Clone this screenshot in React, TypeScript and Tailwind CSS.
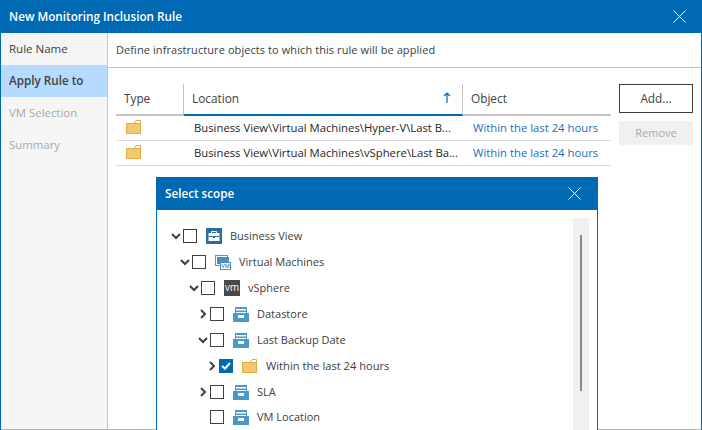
const font = "font-['Open_Sans','Noto_Sans',sans-serif]"

function Folder() {
    return (
        <svg className="block shrink-0" width="15" height="14" viewBox="0 0 15 14">
            <path d="M8 4l2-3.500h4.500V4" fill="#fff" stroke="#e3a93c" />
            <path d="M.5 3.500h14v10H.5z" fill="#f2c96f" stroke="#e3a93c" />
        </svg>
    )
}

function Chevron({ open }: { open?: boolean }) {
    return (
        <svg width="10" height="10" viewBox="0 0 10 10" className="block shrink-0">
            {open ? (
                <path d="M1 3l4 4 4-4" fill="none" stroke="#404040" strokeWidth="2" />
            ) : (
                <path d="M3 1l4 4-4 4" fill="none" stroke="#404040" strokeWidth="2" />
            )}
        </svg>
    )
}

function Check({ checked }: { checked?: boolean }) {
    if (checked) {
        return (
            <span className="w-[14px] h-[14px] shrink-0 bg-[#0069b3] flex items-center justify-center">
                <svg width="10" height="8" viewBox="0 0 10 8">
                    <path d="M1 4l3 2.600L9 1" fill="none" stroke="#fff" strokeWidth="2" />
                </svg>
            </span>
        )
    }
    return <span className="w-[14px] h-[14px] shrink-0 border border-[#404040] bg-white" />
}

function BusinessIcon() {
    return (
        <svg width="16" height="16" viewBox="0 0 16 16" className="block shrink-0">
            <rect width="16" height="16" fill="#2b6e9e" />
            <path d="M2.500 5h11v8h-11z" fill="#fff" />
            <path d="M5.500 5V3.500h5V5" fill="none" stroke="#fff" />
            <path d="M2.500 8.500h11" stroke="#2b6e9e" />
            <path d="M7 8h2v2H7z" fill="#2b6e9e" />
        </svg>
    )
}

function VmGroupIcon() {
    return (
        <svg width="16" height="15" viewBox="0 0 16 15" className="block shrink-0">
            <rect x=".5" y=".5" width="12" height="10" fill="#fff" stroke="#8a8a8a" />
            <rect x="2" y="2" width="12" height="7" fill="#4a90c8" />
            <rect x="5.500" y="7.500" width="10" height="7" fill="#fff" stroke="#4a90c8" />
            <text x="10.500" y="13.200" textAnchor="middle" fontSize="5.500" fill="#5a7a90" fontWeight="600">VM</text>
        </svg>
    )
}

function VsphereIcon() {
    return (
        <svg width="16" height="16" viewBox="0 0 16 16" className="block shrink-0">
            <rect width="16" height="16" fill="#47494d" />
            <text x="8" y="11" textAnchor="middle" fontSize="10" fill="#fff" textLength="14" lengthAdjust="spacingAndGlyphs">vm</text>
        </svg>
    )
}

function CabinetIcon() {
    return (
        <svg width="16" height="15" viewBox="0 0 16 15" className="block shrink-0">
            <path d="M2 0h12v2H2z" fill="#4a97c9" />
            <path d="M2 2h1v4H2zM13 2h1v4h-1z" fill="#4a97c9" />
            <path d="M3 3.500h10v1.500H3z" fill="#4a97c9" />
            <path d="M0 6h16v9H0z" fill="#4a97c9" />
            <path d="M5 8h6v3H5z" fill="#fff" />
        </svg>
    )
}

const treeRows = [
    { label: "Business View", pad: "pl-[14px]", icon: <BusinessIcon />, open: true, arrow: true },
    { label: "Virtual Machines", pad: "pl-[23px]", icon: <VmGroupIcon />, open: true, arrow: true },
    { label: "vSphere", pad: "pl-[32px]", icon: <VsphereIcon />, open: true, arrow: true },
    { label: "Datastore", pad: "pl-[41px]", icon: <CabinetIcon />, arrow: true },
    { label: "Last Backup Date", pad: "pl-[41px]", icon: <CabinetIcon />, open: true, arrow: true },
    { label: "Within the last 24 hours", pad: "pl-[50px]", icon: <Folder />, arrow: true, checked: true, wide: true },
    { label: "SLA", pad: "pl-[41px]", icon: <CabinetIcon />, arrow: true },
    { label: "VM Location", pad: "pl-[41px]", icon: <CabinetIcon /> },
]

const tableRows = [
    "Business View\\Virtual Machines\\Hyper-V\\Last B...",
    "Business View\\Virtual Machines\\vSphere\\Last Ba...",
]

export default function App() {
    return (
        <div className={`relative w-[702px] h-[430px] overflow-hidden bg-white text-[11.3px] text-[#404040] ${font}`}>
            <div className="h-full flex flex-col border-x border-[#0069b3]">
                <div className="h-[33px] shrink-0 bg-[#0069b3] flex items-center justify-between pl-[9px] pr-[16px] -mx-px">
                    <span className="text-white font-semibold text-[11.7px]">New Monitoring Inclusion Rule</span>
                    <svg width="13" height="13" viewBox="0 0 13 13">
                        <path d="M.5.5l12 12M12.500.5l-12 12" stroke="#fff" />
                    </svg>
                </div>
                <div className="flex-1 flex border-b border-[#b8b8b8]">
                    <div className="w-[107px] shrink-0 bg-[#f5f5f5] border-r border-[#c4c4c4]">
                        <div className="h-[32px] flex items-center pl-[8px] text-[11.5px]">Rule Name</div>
                        <div className="h-[32px] flex items-center pl-[8px] text-[11.7px] font-semibold bg-[#b5dcff]">Apply Rule to</div>
                        <div className="h-[32px] flex items-center pl-[8px] text-[11.4px] text-[#a8a8a8]">VM Selection</div>
                        <div className="h-[32px] flex items-center pl-[8px] text-[11.4px] text-[#a8a8a8]">Summary</div>
                    </div>
                    <div className="flex-1">
                        <div className="h-[35px] flex items-center pl-[8px] border-b border-[#c4c4c4] text-[11px] tracking-[0.08px]">
                            Define infrastructure objects to which this rule will be applied
                        </div>
                        <div className="flex pl-[8px] pt-[16px] gap-[8px]">
                            <div className="w-[495px]">
                                <div className="flex h-[32px] text-[11.800px]">
                                    <div className="w-[68px] flex items-center pl-[8px] border-r border-[#c4c4c4] border-b-[2px] border-b-[#c4c4c4]">Type</div>
                                    <div className="w-[279px] flex items-center justify-between pl-[8px] pr-[11px] border-r border-[#c4c4c4] border-b-[2px] border-b-[#0069b3]">
                                        <span>Location</span>
                                        <svg width="8" height="11" viewBox="0 0 8 11" className="mb-[3px]">
                                            <path d="M4 11V1M1 4l3-3 3 3" fill="none" stroke="#0069b3" strokeWidth="1.200" />
                                        </svg>
                                    </div>
                                    <div className="flex-1 flex items-center pl-[8px] border-b-[2px] border-[#c4c4c4]">Object</div>
                                </div>
                                {tableRows.map((path) => (
                                    <div key={path} className="flex h-[25px] items-center border-b border-[#dcdcdc]">
                                        <div className="w-[68px] pl-[10px] pb-[2px]"><Folder /></div>
                                        <div className="w-[279px] pl-[10px] whitespace-nowrap text-[#262626]">{path}</div>
                                        <div className="pl-[10px] whitespace-nowrap text-[#1a6fc0]">Within the last 24 hours</div>
                                    </div>
                                ))}
                            </div>
                            <div className="w-[74px] flex flex-col gap-[8px]">
                                <div className="h-[29px] border border-[#404040] flex items-center justify-center text-[11.800px]">Add...</div>
                                <div className="h-[24px] bg-[#f0f0f0] text-[#a8a8a8] text-[11px] flex items-center justify-center">Remove</div>
                            </div>
                        </div>
                    </div>
                </div>
            </div>

            <div className="absolute left-[156px] top-[177px] w-[442px] h-[260px] bg-white border-x border-[#0069b3] text-[11px]">
                <div className="h-[33px] bg-[#0069b3] -mx-px flex items-center justify-between pl-[9px] pr-[17px]">
                    <span className="text-white font-semibold text-[11.700px]">Select scope</span>
                    <svg width="13" height="13" viewBox="0 0 13 13">
                        <path d="M.5.5l12 12M12.500.5l-12 12" stroke="#fff" />
                    </svg>
                </div>
                <div className="flex pt-[8px] pr-[8px]">
                    <div className="flex-1 pt-[5px]">
                        {treeRows.map((row) => (
                            <div key={row.label} className={`${row.label === "VM Location" ? "h-[24px]" : "h-[26px]"} flex items-center ${row.pad}`}>
                                <span className="w-[11px] shrink-0 mr-px">{row.arrow && <Chevron open={row.open} />}</span>
                                <Check checked={row.checked} />
                                <span className="w-[9px] shrink-0" />
                                {row.icon}
                                <span className={row.wide ? "ml-[9px] whitespace-nowrap text-[11.150px]" : "ml-[8px] whitespace-nowrap"}>{row.label}</span>
                            </div>
                        ))}
                    </div>
                    <div className="w-[16px] h-[230px] bg-[#f0f0f0] flex justify-center pt-[17px]">
                        <div className="w-[2px] h-[156px] bg-[#888888]" />
                    </div>
                </div>
            </div>
        </div>
    )
}
